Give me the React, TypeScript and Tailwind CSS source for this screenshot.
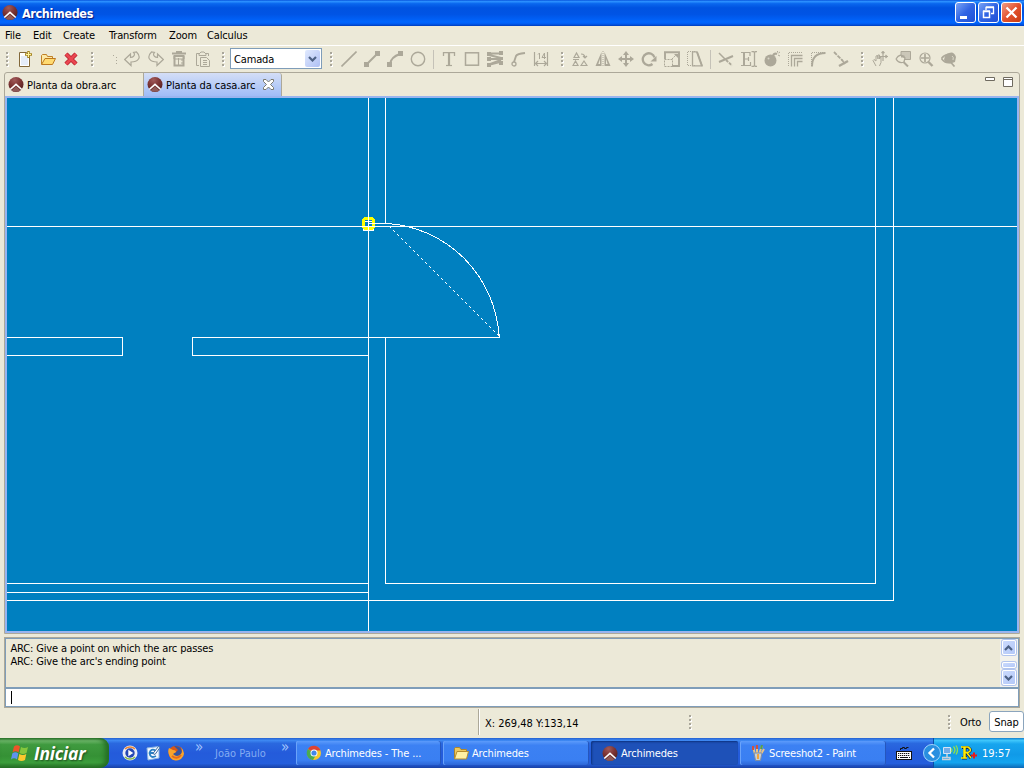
import React from "react";

type IconProps = { children: React.ReactNode; w?: number; h?: number; className?: string };

function Ico({ children, w = 16, h = 16, className = "" }: IconProps) {
  return (
    <svg width={w} height={h} viewBox={`0 0 ${w} ${h}`} fill="none" className={`block shrink-0 ${className}`}>
      {children}
    </svg>
  );
}

function ArchLogo({ className = "" }: { className?: string }) {
  return (
    <Ico className={className}>
      <defs>
        <radialGradient id="arch" cx="40%" cy="20%" r="80%">
          <stop offset="0" stopColor="#a05a5a" />
          <stop offset="0.5" stopColor="#7d3535" />
          <stop offset="1" stopColor="#54201f" />
        </radialGradient>
      </defs>
      <circle cx="8" cy="7.500" r="7.500" fill="url(#arch)" />
      <path d="M3.500 13.500L8 9.500L12.500 13.500L10.500 14.800H5.500Z" fill="#8f5a58" />
      <path d="M2.300 12.500L8 7.300L13.700 12.500" stroke="#fff" strokeWidth="1.600" />
    </Ico>
  );
}

function Grip({ className = "" }: { className?: string }) {
  return (
    <Ico w={4} h={16} className={className}>
      {[1, 5, 9, 13].map((y) => (
        <g key={y}>
          <rect x="1" y={y + 1} width="2" height="2" fill="#fff" />
          <rect x="0" y={y} width="2" height="2" fill="#a9a69a" />
        </g>
      ))}
    </Ico>
  );
}

const G = "#aca899";

const drawIcons: React.ReactNode[] = [
  <path d="M.500 15.500L15.500 .500" stroke={G} strokeWidth="1.600" />,
  <g><path d="M3 13L13 3" stroke={G} strokeWidth="2" /><path d="M0 11h5v5H0zM11 0h5v5h-5z" fill={G} /></g>,
  <g><path d="M3 13Q4 6 13 3" stroke={G} strokeWidth="2" /><path d="M0 11h5v5H0zM11 0h5v5h-5z" fill={G} /></g>,
  <circle cx="8" cy="8" r="6.700" stroke={G} strokeWidth="1.400" />,
];

const annotateIcons: React.ReactNode[] = [
  <g><path d="M2.500 5V1.700h11V5" stroke={G} strokeWidth="1.300" /><path d="M8 2v12.500" stroke={G} strokeWidth="2.200" /><path d="M5 14.500h6" stroke={G} strokeWidth="1.200" /></g>,
  <rect x="1.500" y="1.800" width="13" height="12.400" stroke={G} strokeWidth="1.500" />,
  <g>
    <path d="M2 2.500h12M2 4L14 7M2 8h12M2 13.500L14 9" stroke={G} strokeWidth="2" />
    <path d="M2 14L14 11" stroke={G} strokeWidth="1.500" />
    <path d="M0 1h4v4H0zM12 0h4v4h-4zM0 6h4v4H0zM12 6h4v3h-4zM0 12h4v4H0zM12 10h4v4h-4z" fill={G} />
  </g>,
  <g><circle cx="4" cy="13" r="2" stroke={G} strokeWidth="1.300" /><path d="M4 11L6 5Q7 2.800 15 2" stroke={G} strokeWidth="1.900" /></g>,
  <g>
    <path d="M1.500 1v14M14.500 1v14M2 12.500h12M5 10L2.500 12.500L5 15M11 10L13.500 12.500L11 15" stroke={G} strokeWidth="1.200" />
    <path d="M5 3.500L6.500 2v6M11.500 8V2L9 6.500h4" stroke={G} />
  </g>,
];

const editIcons: React.ReactNode[] = [
  <path d="M2 6.500L4.500 2L7 6.500ZM1 14.500L3.500 10L6 14.500ZM9 14.500L12 10L15 14.500ZM1 8.500h6M9 3q4 0 4 4M11 5l2 2l2-2" stroke={G} strokeWidth="1.200" />,
  <g><path d="M6.500 1v14H.500ZM9.500 1v14h6Z" fill={G} /><path d="M5 8v5H3.300ZM11 8v5h1.700Z" fill="#ece9d8" /><path d="M8 0v16" stroke={G} strokeDasharray="1 1" /></g>,
  <g><path d="M8 2v12M2 8h12" stroke={G} strokeWidth="2" /><path d="M8 0l3 4H5zM8 16l3-4H5zM0 8l4-3v6zM16 8l-4-3v6z" fill={G} /></g>,
  <g><path d="M11.500 13A6 6 0 1 1 13.500 6.500" stroke={G} strokeWidth="2.300" /><path d="M9.500 10.500h6V5z" fill={G} /></g>,
  <g><path d="M0 1.200h15V15H8M1 1v7" stroke={G} strokeWidth="1.900" /><path d="M.500 8.500h8v7h-8zM8 8l5-5" stroke={G} strokeDasharray="2 1" /><path d="M10 3h4v4z" fill={G} /></g>,
  <g><path d="M8 .500H.500v14H8" stroke={G} strokeDasharray="1 1" /><path d="M5.500 .800h4.500l5 14H5.500z" stroke={G} strokeWidth="1.300" /><path d="M10 1l5 14" stroke={G} strokeWidth="2" /></g>,
];

const modifyIcons: React.ReactNode[] = [
  <g><path d="M1 11L15 5" stroke={G} strokeWidth="2" /><path d="M1 2L7 8" stroke={G} strokeWidth="1.500" /><path d="M8 9L14 14.500" stroke={G} strokeWidth="1.800" strokeDasharray="3 1" /></g>,
  <g><path d="M0 1.500h9V5M0 14.500h9.500V11M4 8h4M7.500 6v4" stroke={G} strokeWidth="1.200" /><path d="M3 2v12" stroke={G} strokeWidth="2" /><path d="M10.500 .500h2l1 1l1-1h1.500M13.500 1v14M10.500 15.500h2l1-1l1 1h1.500" stroke={G} strokeWidth="1.300" /></g>,
  <g><circle cx="6.500" cy="9.500" r="6" fill={G} /><path d="M9 5q1-3 4-2" stroke={G} strokeWidth="2.200" /><path d="M13.500 0v1.500M14 4l2 1M14.500 2l1.500-1" stroke={G} /><circle cx="4.500" cy="7.500" r="1" fill="#d8d5c7" /></g>,
  <g><path d="M1.500 15V1.500H15" stroke={G} strokeDasharray="1 1" /><path d="M4.500 15.500V4.500H15.500M7.500 15.500V7.500H15.500M10.500 15.500V10.500H15.500" stroke={G} strokeWidth="1.300" /></g>,
  <g><path d="M1.500 15V1.500H15" stroke={G} strokeDasharray="1 1" /><path d="M2 15.500Q2 2 15.500 2" stroke={G} strokeWidth="1.900" /></g>,
  <g><path d="M1 1L10 10" stroke={G} strokeWidth="1.800" strokeDasharray="4 1" /><path d="M6 15L15 10" stroke={G} strokeWidth="2.300" /><path d="M9 9l3 4" stroke={G} strokeWidth="1.300" /></g>,
];

const viewIcons: React.ReactNode[] = [
  <g><path d="M11 0v10M7 5.500h9M9.500 2L11 .500l1.500 1.500M13.500 4L15 5.500L13.500 7" stroke={G} strokeWidth="1.200" /><path d="M4 15L1 9.500l1-1l2 1.500V5l1.500-.500L6 8V4h1.500v4L9 5.500v6L7.500 15" stroke={G} /></g>,
  <g><path d="M6 .500h9.500v8H6z" fill="#cbc7b8" stroke={G} /><path d="M1 8q4-7 9-1l-1 4q-5 2-8-3" fill="#ece9d8" stroke={G} strokeWidth="1.300" /><path d="M6 5.500h3.500M8.500 11L13 15.500" stroke={G} strokeWidth="2" /></g>,
  <g><circle cx="7" cy="7" r="5" stroke={G} strokeWidth="1.200" /><path d="M3 7h8M7 3v8" stroke={G} strokeWidth="1.700" /><path d="M10.500 11L14.500 15" stroke={G} strokeWidth="2.400" /></g>,
  <g><path d="M3 9Q4 2 8 2q5-2 7 4l-1 5l-3 1q-5 1-8-3" fill={G} /><path d="M.500 7.500q4-5 8-3M.500 7.500q3 5 9 4M9.500 11l4 4.500" stroke={G} strokeWidth="1.700" /><path d="M11 5q2 1 1 4" stroke="#dedbcb" /></g>,
];

function IconRow({ icons, className }: { icons: React.ReactNode[]; className: string }) {
  return (
    <div className={`flex shrink-0 ${className}`}>
      {icons.map((icon, i) => (
        <Ico key={i}>{icon}</Ico>
      ))}
    </div>
  );
}

function Chevron({ up = false }: { up?: boolean }) {
  return (
    <Ico w={9} h={6}>
      <path d={up ? "M1 5L4.500 1.500L8 5" : "M1 1L4.500 4.500L8 1"} stroke="#4d6185" strokeWidth="2.200" />
    </Ico>
  );
}

const scrollButton =
  "flex items-center justify-center rounded-[2px] border border-white bg-gradient-to-br from-[#cbdafd] to-[#b3c8f8] shadow-[0_0_0_1px_#b1c4ee]";

function TitleBar() {
  const button = "flex h-[21px] w-[21px] items-center justify-center rounded-[3px] border border-white";
  return (
    <header className="flex h-[26px] shrink-0 items-center bg-[linear-gradient(180deg,#0855dd_0%,#2b90ff_6%,#0a67ee_14%,#0053e1_30%,#0054e5_55%,#0066ff_85%,#005bf0_92%,#003dbb_100%)] pl-[2px] pr-[2px]">
      <ArchLogo className="-mt-px" />
      <h1 className="ml-[4px] mt-px text-[12.500px] leading-[26px] tracking-[-0.350px] font-bold text-white [text-shadow:1px_1px_1px_#0a1883] [font-family:'DejaVu_Sans_Condensed','DejaVu_Sans',sans-serif]">
        Archimedes
      </h1>
      <div className="-mt-px ml-auto flex gap-[2px]">
        <div className={`${button} bg-gradient-to-br from-[#7aa2f4] via-[#3064e4] to-[#1f4fd6]`}>
          <Ico w={19} h={19}><path d="M4 13h7v3H4z" fill="#fff" /></Ico>
        </div>
        <div className={`${button} bg-gradient-to-br from-[#7aa2f4] via-[#3064e4] to-[#1f4fd6]`}>
          <Ico w={19} h={19}><path d="M7 7V4.500h7.500v6H12M7 4h8" stroke="#fff" strokeWidth="1.300" /><path d="M4.500 8.500h6v6h-6zM4 8h7" stroke="#fff" strokeWidth="1.500" /></Ico>
        </div>
        <div className={`${button} bg-gradient-to-br from-[#f09a82] via-[#e3512c] to-[#c93c10]`}>
          <Ico w={19} h={19}><path d="M4.500 4.500l10 10M14.500 4.500l-10 10" stroke="#fff" strokeWidth="2.300" /></Ico>
        </div>
      </div>
    </header>
  );
}

function MenuBar() {
  return (
    <nav className="flex h-[20px] shrink-0 border-b border-white pl-[5px] pt-px leading-[18px]">
      <span className="w-[28px]">File</span>
      <span className="w-[30px]">Edit</span>
      <span className="w-[46px]">Create</span>
      <span className="w-[60px]">Transform</span>
      <span className="w-[38px]">Zoom</span>
      <span>Calculus</span>
    </nav>
  );
}

function Toolbar() {
  return (
    <div className="flex h-[26px] shrink-0 items-center pl-[6px]">
      <Grip />
      <div className="ml-[6px] flex gap-[7px]">
        <Ico>
          <path d="M3.500 1.500h7l3 3v11h-10z" fill="#fff" stroke="#82683a" />
          <path d="M5 5h7v9H5z" fill="#e5edf9" />
          <path d="M12.500 0v7M9 3.500h7" stroke="#a58420" strokeWidth="2.500" />
          <path d="M12.500 1v5M10 3.500h5" stroke="#fff39b" />
        </Ico>
        <Ico className="ml-px">
          <path d="M1.500 13V4.500l1-1h4l1 2h5v2" fill="#fce9a7" stroke="#c08025" />
          <path d="M1.500 13.500l3.500-6h10.500l-3 6z" fill="#ffda70" stroke="#bd781e" />
        </Ico>
        <Ico>
          <path d="M3 3l10 10M13 3L3 13" stroke="#ba2730" strokeWidth="4.500" />
          <path d="M3 3l10 10M13 3L3 13" stroke="#ea4650" strokeWidth="2.700" />
        </Ico>
      </div>
      <Grip className="ml-[12px]" />
      <Ico w={4} className="ml-[18px]"><path d="M0 4h1v1H0zM3 6h1v1H3zM3 9h1v1H3zM3 12h1v1H3z" fill={G} /></Ico>
      <div className="ml-[7px] flex gap-[7px]">
        <Ico><path d="M.700 8.500L6.500 3v3.500q4-.500 4-3.500L9.500 1.500l3-.500q4 4 2 7t-7.500 3v3.500z" stroke={G} strokeWidth="1.200" /></Ico>
        <Ico className="ml-px"><path d="M15.300 8.500L9.500 3v3.500q-4-.500-4-3.500l1-1.500l-3-.500q-4 4-2 7t7.500 3v3.500z" stroke={G} strokeWidth="1.200" /></Ico>
        <Ico><path d="M1 2.500h14M5 1h6M3.500 5v9.500h9V5z" stroke={G} strokeWidth="2" /><path d="M3 5h10v3H3zM7.500 7v7M10 9h2M10 12h2" stroke={G} /></Ico>
        <Ico className="ml-px"><path d="M4 14.500H1.500v-12h3M11 2.500h2.500V5M4 4.500V3l2-2h3l2 2v1.500z" stroke={G} /><path d="M5.500 6.500h6l3 3v6h-9zM8 9.500h4M8 11.500h4M8 13.500h4" stroke={G} /></Ico>
      </div>
      <Grip className="ml-[11px]" />
      <div className="-mt-px ml-[4px] flex h-[21px] w-[92px] shrink-0 items-center justify-between border border-[#7f9db9] bg-white pl-[3px] pr-[1px]">
        <span className="pt-px">Camada</span>
        <span className="flex h-[17px] w-[15px] items-center justify-center rounded-[2px] bg-gradient-to-br from-[#e1eafe] to-[#aebff4]"><Chevron /></span>
      </div>
      <Grip className="ml-[8px]" />
      <IconRow icons={drawIcons} className="ml-[7px] gap-[7px]" />
      <div className="ml-[7px] h-[19px] w-px shrink-0 bg-[#c5c2b8]" />
      <IconRow icons={annotateIcons} className="ml-[7px] gap-[7px]" />
      <Grip className="ml-[12px]" />
      <IconRow icons={editIcons} className="ml-[7px] gap-[7px]" />
      <div className="ml-[7px] h-[19px] w-px shrink-0 bg-[#c5c2b8]" />
      <IconRow icons={modifyIcons} className="ml-[7px] gap-[7px]" />
      <Grip className="ml-[12px]" />
      <IconRow icons={viewIcons} className="ml-[7px] gap-[7px]" />
    </div>
  );
}

function Tabs() {
  return (
    <div className="flex h-[23px] shrink-0">
      <div className="flex w-[138px] items-center pl-[3px]">
        <ArchLogo />
        <span className="ml-[3px] pt-px tracking-[-0.080px]">Planta da obra.arc</span>
      </div>
      <div className="flex w-[139px] items-center rounded-tr-[3px] border-x border-[#aca899] bg-gradient-to-b from-[#d4def6] to-[#9fbcf7] pl-[3px]">
        <ArchLogo />
        <span className="ml-[3px] w-[90px] pt-px tracking-[-0.080px]">Planta da casa.arc</span>
        <Ico w={11} h={11} className="ml-[7px]">
          <path d="M.500 .500h2.500L5.500 3L8 .500h2.500v2L7.500 5.500L10.500 8.500v2H8L5.500 8L3 10.500H.500v-2L3.500 5.500L.500 2.500z" fill="#fff" stroke="#7b7a70" />
        </Ico>
      </div>
      <div className="ml-auto flex pr-[6px] pt-[4px]">
        <Ico w={10} h={4}><path d="M.500 .500h9v3h-9z" fill="#fff" stroke="#6f6b60" /></Ico>
        <Ico w={10} h={10} className="ml-[8px]"><path d="M.500 .500h9v9h-9zM0 2.500h10" fill="#fff" stroke="#6f6b60" /></Ico>
      </div>
    </div>
  );
}

function Drawing() {
  return (
    <svg width="1010" height="533" viewBox="7 98 1010 533" fill="none" shapeRendering="crispEdges" className="block bg-[#0080c0]">
      <path d="M363.500 221.500h10v9h-10z" stroke="#fff" />
      <path d="M365 218.500h7l1.500 1.500v7l-1.500 1.500h-7l-1.500-1.500v-7z" stroke="#ff0" strokeWidth="3" />
      <g stroke="#fff">
        <path d="M7 226.500H1017M368.500 98V631" />
        <path d="M385.500 98V223M385.500 337V583.500H875.500V98M893.500 98V600.500H7" />
        <path d="M7 583.500H368M7 592.500H368" />
        <path d="M7 337.500H122.500V355.500H7M368 355.500H192.500V337.500H499.500V334" />
        <path d="M368 223.500H388A120 120 0 0 1 499 336" />
        <path d="M389 226L499 336" strokeDasharray="2.200 3.457" />
      </g>
    </svg>
  );
}

function Console() {
  return (
    <section className="mx-[4px] mt-[3px] h-[71px] w-[1016px] shrink-0 border border-[#aca899]">
      <div className="flex h-[50px] justify-between border border-[#7f9db9]">
        <div className="pl-[4.500px] pt-[3px] leading-[13px]">
          <p>ARC: Give a point on which the arc passes</p>
          <p>ARC: Give the arc's ending point</p>
        </div>
        <div className="flex w-[18px] flex-col items-center bg-[#f3f2ec] pr-px pt-[1px]">
          <div className={`${scrollButton} h-[15px] w-[14px]`}><Chevron up /></div>
          <div className={`${scrollButton} mt-[7px] h-[6px] w-[14px]`} />
          <div className={`${scrollButton} mt-[2px] h-[15px] w-[14px]`}><Chevron /></div>
        </div>
      </div>
      <div className="flex h-[19px] items-center border border-[#7f9db9] bg-white pl-[5px]">
        <div className="h-[13px] w-px bg-black" />
      </div>
    </section>
  );
}

function StatusBar() {
  return (
    <div className="flex h-[30px] shrink-0 items-center pb-[2px]">
      <div className="ml-[478px] h-[26px] w-[2px] border-l border-[#aca899] bg-white" />
      <span className="ml-[5px] w-[204px] pt-[2px] tracking-[0px]">X: 269,48 Y:133,14</span>
      <Grip />
      <Grip className="ml-[255px]" />
      <span className="ml-[8px] w-[29px]">Orto</span>
      <div className="-mt-[2px] flex h-[21px] w-[35px] items-center justify-center rounded-[3px] border border-[#8ba5bd] bg-white pt-[2px]">Snap</div>
    </div>
  );
}

function Task({ icon, label, active = false, className }: { icon: React.ReactNode; label: string; active?: boolean; className: string }) {
  return (
    <div className={`flex h-[24px] shrink-0 items-center rounded-[2px] text-white ${active ? "bg-[#1e51b8] pl-[11px] pt-px shadow-[inset_1px_1px_2px_#0d327f]" : "bg-[linear-gradient(180deg,#5c9bfb_0%,#3c81f3_18%,#3a7ff2_80%,#2d66d6_100%)] pl-[10px] shadow-[inset_1px_0_0_#6aa3fa,inset_-1px_0_0_#2556bd]"} ${className}`}>
      {icon}
      <span className="ml-[3px]">{label}</span>
    </div>
  );
}

function Taskbar() {
  return (
    <footer className="flex h-[30px] shrink-0 items-center bg-[linear-gradient(180deg,#2460cf_0%,#3d88f2_8%,#2a68df_18%,#245bdb_50%,#245edc_85%,#1941a5_100%)]">
      <div className="flex h-[30px] w-[109px] shrink-0 items-center rounded-r-[9px] bg-[linear-gradient(180deg,#2d742d_0%,#6eb86b_9%,#3f9a3f_22%,#359135_60%,#3c9e3c_82%,#256f25_100%)] pl-[11px] shadow-[inset_-4px_0_5px_#246d24]">
        <Ico w={19} h={18}>
          <path d="M3 2.500Q6 0 9 2.500L7.500 8.500Q4.500 6 1.500 8.500Z" fill="#ee5429" />
          <path d="M10 3Q13.500 5 17 3L15.500 9Q12 11 8.500 9Z" fill="#84c63d" />
          <path d="M1.300 9.500Q4.300 7 7.300 9.500L6 15.500Q3 13 0 15.500Z" fill="#5f93ee" />
          <path d="M8.300 10Q12 12 15.300 10L14 16Q10.500 18 7 16Z" fill="#fbc82e" />
        </Ico>
        <span className="ml-[4px] text-[17.500px] leading-[28px] tracking-[-0.200px] font-bold italic text-white [text-shadow:1px_1px_2px_#1c4a1c] [font-family:'Open_Sans','Noto_Sans',sans-serif]">Iniciar</span>
      </div>
      <div className="ml-[13px] flex gap-[7px]">
        <Ico>
          <circle cx="8" cy="8" r="7.500" fill="#e9ecf5" /><path d="M3 4a7 7 0 0 1 10 0" stroke="#e9883b" strokeWidth="1.500" /><path d="M3 12a7 7 0 0 0 10 0" stroke="#85b94c" strokeWidth="1.500" /><circle cx="8" cy="8" r="4.700" fill="#2447b4" /><path d="M6.300 4.800L11.300 8L6.300 11.200z" fill="#fff" />
        </Ico>
        <Ico>
          <path d="M2 3l12-1.500v11.500l-11 2z" fill="#f2f8ff" stroke="#8db7e2" /><path d="M10.500 5.500Q6 3 4.500 8q1 6 6.500 3M5 8h4" stroke="#2a80c4" strokeWidth="1.800" /><path d="M8 8.500L13.500 1.500l1.500 1l-5 7z" fill="#fff" stroke="#3c6da4" />
        </Ico>
        <Ico>
          <circle cx="8" cy="8" r="7.300" fill="#d95615" /><path d="M6 1q7-1 8 6q-1 6-7 5q-4-1-3-5l3 1l3-3z" fill="#37549d" /><path d="M1 3q2 1 4 2q3 0 3 2L5 9q4 4 8 0q2-3 0-7q6 7 0 12q-7 4-11-2q-3-5-1-9" fill="#f8a42d" /><path d="M4 11q5 4 9-1" stroke="#e56b1d" strokeWidth="2" />
        </Ico>
      </div>
      <span className="ml-[11px] -mt-[12px] w-[9px] text-[15px] leading-[15px] text-[#a4c6fd]">»</span>
      <span className="ml-[11px] w-[52px] tracking-[0px] text-[#83acf2]">João Paulo</span>
      <span className="ml-[14px] -mt-[12px] w-[9px] text-[15px] leading-[15px] text-[#a4c6fd]">»</span>
      <div className="ml-[6px] flex gap-[2px]">
        <Task className="w-[145px]" label="Archimedes - The ..." icon={
          <Ico><circle cx="8" cy="8" r="7" fill="#f6c62a" /><path d="M8 8L2 4a7 7 0 0 1 12.500 1.500H8z" fill="#dc4335" /><path d="M2 4a7 7 0 0 0 5 11l3-5z" fill="#4aaa50" /><circle cx="8" cy="8" r="3.500" fill="#fff" /><circle cx="8" cy="8" r="2.600" fill="#4386e9" /></Ico>
        } />
        <Task className="w-[146px]" label="Archimedes" icon={
          <Ico><path d="M1.500 13.500V3.500l1-1h4l1.500 2h5.500v2" fill="#edc85e" stroke="#ac862d" /><path d="M1.500 14L4 6.500h11.500L13.500 14z" fill="#fff0a4" stroke="#b58c2d" /></Ico>
        } />
        <Task className="w-[147px]" active label="Archimedes" icon={<ArchLogo />} />
        <Task className="w-[146px]" label="Screeshot2 - Paint" icon={
          <Ico><path d="M5 9L3 2M7 9L7 1M9 9L12 1M11 9L14 4" stroke="#e7c285" strokeWidth="2" /><path d="M3 1v4M7 0v4" stroke="#cf5140" strokeWidth="2" /><path d="M12 0l-1 4" stroke="#55a04e" strokeWidth="2" /><path d="M4 8h8l-1.500 7.500h-5z" fill="#c8cfd6" stroke="#7d8da3" /><path d="M8 9v5" stroke="#f1a53c" strokeWidth="2" /></Ico>
        } />
      </div>
      <Ico className="ml-[10px]"><path d="M4.500 5V3.500h2v-1h2v1h2v-1h2" stroke="#111" /><path d="M0 6h16v9H0z" fill="#111" /><path d="M1 7h14v7H1z" fill="#fff" /><path d="M2 8.500h12M2 10.500h12" stroke="#111" strokeWidth="1.200" strokeDasharray="1.300 .700" /><path d="M2 12.500h1M4 12.500h8M13 12.500h1" stroke="#111" /></Ico>
      <div className="ml-[21px] flex h-[30px] flex-1 items-center border-l border-[#0b4fa5] bg-[linear-gradient(180deg,#137dcc_0%,#3fc6fb_8%,#17a5ee_20%,#109ae8_55%,#13a4ef_82%,#0d68b5_100%)] text-white">
        <Ico w={18} h={18} className="-ml-[11px]"><circle cx="9" cy="9" r="8.500" fill="#298fe0" stroke="#a3d5fb" /><path d="M11 4.500L6.500 9L11 13.500" stroke="#fff" strokeWidth="2.300" /></Ico>
        <Ico className="ml-px"><path d="M1.500 2.500h7v6h-7z" fill="#72ace7" stroke="#d4e4f5" /><path d="M5 9v3M0 12.500h8v2H0z" stroke="#c9d2dc" strokeWidth="1.500" /><path d="M9 3.500q2 1.500 0 3.500M11.500 1.500q3 3.500 0 7M14 .500q3 4.500 0 9" stroke="#8ee04d" strokeWidth="1.300" /></Ico>
        <Ico className="ml-[3px]"><path d="M1 2.500h6q5 2.500 0 5M4 2.500v10M1 13h5M6 8l4 5" stroke="#142250" strokeWidth="3" /><path d="M0 2h7q5 3 0 5.500H4M0 13h6M6 8l4 5" stroke="#ffeb00" strokeWidth="1.600" /><path d="M3.500 2v11" stroke="#ffeb00" strokeWidth="2.500" /><path d="M10 10.500h6M13 7.500v6" stroke="#e81b1b" strokeWidth="2" /></Ico>
        <span className="ml-[5px] tracking-[0px]">19:57</span>
      </div>
    </footer>
  );
}

export default function App() {
  return (
    <div className="flex h-[768px] w-[1024px] flex-col overflow-hidden bg-[#ece9d8] text-[11px] leading-[13px] tracking-[-0.150px] whitespace-nowrap text-black [font-family:'DejaVu_Sans_Condensed','DejaVu_Sans',sans-serif]">
      <TitleBar />
      <MenuBar />
      <Toolbar />
      <main className="mx-[4px] h-[562px] w-[1016px] shrink-0 rounded-t-[3px] border border-[#aca899]">
        <Tabs />
        <div className="border-2 border-[#99b4ef]">
          <Drawing />
        </div>
      </main>
      <Console />
      <StatusBar />
      <Taskbar />
    </div>
  );
}
